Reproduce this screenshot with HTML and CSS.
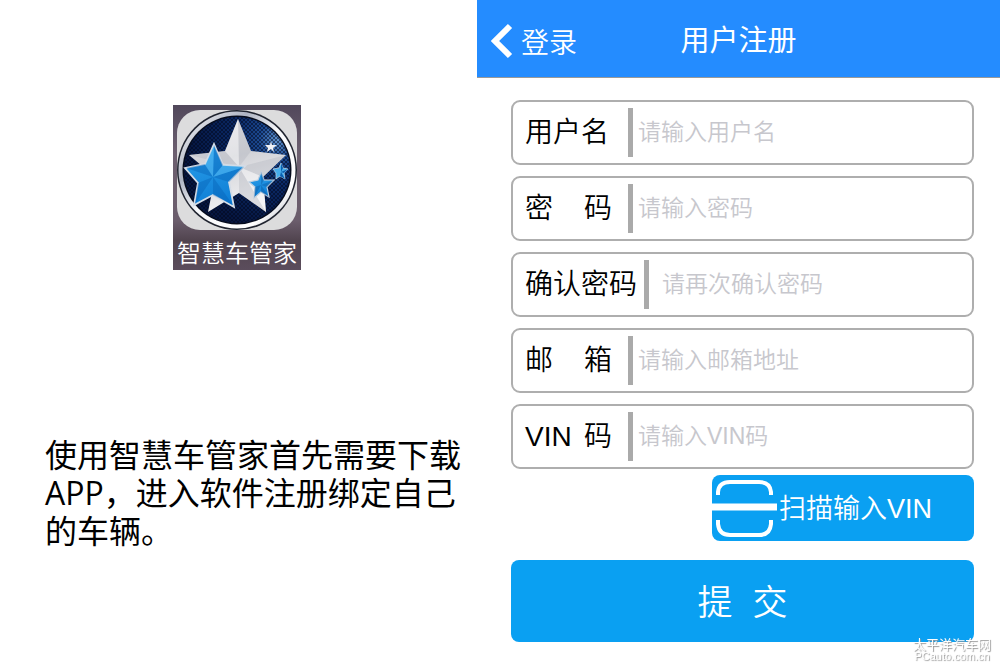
FILE: index.html
```
<!DOCTYPE html>
<html lang="zh-CN">

<head>
    <meta charset="UTF-8">
    <meta name="viewport" content="width=device-width, initial-scale=1.0">
    <title>用户注册</title>
    <link rel="stylesheet" href="styles.css">
</head>

<body>
    <section class="intro">
        <figure class="app">
            <svg class="app-icon" viewBox="4 5 120 120" aria-hidden="true">
                <defs>
                    <linearGradient id="ring" x1="0" y1="0" x2="1" y2="1">
                        <stop offset="0" stop-color="#ffffff"/>
                        <stop offset="0.3" stop-color="#aeb4c2"/>
                        <stop offset="0.5" stop-color="#f7f8fb"/>
                        <stop offset="0.8" stop-color="#ffffff"/>
                        <stop offset="1" stop-color="#9298a6"/>
                    </linearGradient>
                    <radialGradient id="night" cx="0.88" cy="0.22" r="0.85">
                        <stop offset="0" stop-color="#5f93d0"/>
                        <stop offset="0.2" stop-color="#1c4a92"/>
                        <stop offset="0.5" stop-color="#0a2864"/>
                        <stop offset="1" stop-color="#061640"/>
                    </radialGradient>
                    <linearGradient id="silver" x1="0" y1="0" x2="0.3" y2="1">
                        <stop offset="0" stop-color="#e4e4e8"/>
                        <stop offset="0.5" stop-color="#d2d3d8"/>
                        <stop offset="1" stop-color="#efeff1"/>
                    </linearGradient>
                    <linearGradient id="blue" x1="0" y1="0" x2="0.2" y2="1">
                        <stop offset="0" stop-color="#2ea3ec"/>
                        <stop offset="1" stop-color="#0f7fd6"/>
                    </linearGradient>
                    <pattern id="mesh" width="4" height="4" patternUnits="userSpaceOnUse">
                        <path d="M0 1h2M2 3h2" stroke="#01061a" stroke-width="1.4"/>
                    </pattern>
                </defs>
                <rect x="4" y="5" width="120" height="120" rx="23" fill="#dcdcdd"/>
                <circle cx="64" cy="65" r="60" fill="#20242f"/>
                <circle cx="64" cy="65" r="58.5" fill="url(#ring)"/>
                <circle cx="64" cy="65" r="54.5" fill="#050b1c"/>
                <circle cx="64" cy="65" r="53" fill="url(#night)"/>
                <circle cx="64" cy="65" r="53" fill="url(#mesh)" opacity="0.7"/>

                <!-- big silver star -->
                <path d="M65 14L78 46L113 50L90 72L93 107L66 88L35 107L42 72L16 50L52 46Z" fill="url(#silver)"/>
                <path d="M65 14L78 46L66 62ZM113 50L90 72L66 62ZM93 107L66 88L66 62ZM16 50L52 46L66 62Z" fill="#a7a9b2" opacity="0.28"/>
                <path d="M65 14L52 46L66 62ZM90 72L93 107L66 62Z" fill="#fff" opacity="0.35"/>

                <!-- blue star -->
                <path d="M41 39L50 60L72 61L56 77L61 102L40 90L21 100L25 78L12 63L32 59Z" fill="url(#blue)" stroke="#d5dde7" stroke-width="1.8"/>
                <path d="M41 40L50 60L40 72ZM71 62L56 77L40 72ZM60 100L40 90L40 72ZM22 99L25 78L40 72ZM13 63L32 59L40 72Z" fill="#0560b4" opacity="0.4"/>
                <path d="M41 40L32 60L40 72ZM50 60L71 62L40 72Z" fill="#79d0fb" opacity="0.35"/>

                <path d="M88 67L91 75L101 75L94 82L96 92L88 87L81 93L82 82L76 77L85 75Z" fill="url(#blue)" stroke="#bfcfe0" stroke-width="1.2"/>
                <path d="M88 67L91 75L88 80ZM101 75L94 82L88 80ZM96 92L88 87L88 80ZM81 93L82 82L88 80Z" fill="#07549e" opacity="0.4"/>

                <path d="M108 58L110 63L115 64L111 68L112 74L107 71L103 74L103 68L100 64L106 63Z" fill="#46acea" stroke="#b6cfe6" stroke-width="0.8"/>
                <path d="M108 58L110 63L108 67ZM115 64L111 68L108 67ZM112 74L107 71L108 67Z" fill="#0a5faf"/>
                <path d="M98 36L99 40L104 40L100 43L101 47L98 44L94 47L95 43L92 40L97 40Z" fill="#f0f1f4"/>
            </svg>
            <figcaption>智慧车管家</figcaption>
        </figure>
        <p class="intro-text">使用智慧车管家首先需要下载<br>APP，进入软件注册绑定自己<br>的车辆。</p>
    </section>

    <main class="register">
        <header class="top-bar">
            <a class="back" href="#">
                <svg width="22" height="36" viewBox="0 0 22 36" fill="none" stroke="#fff" stroke-width="6" aria-hidden="true">
                    <path d="M19 3L4 18L19 33"/>
                </svg>
                登录
            </a>
            <h1>用户注册</h1>
        </header>

        <form class="form">
            <div class="field">
                <label for="username">用户名</label>
                <input type="text" id="username" placeholder="请输入用户名">
            </div>
            <div class="field">
                <label for="password"><span>密</span><span>码</span></label>
                <input type="password" id="password" placeholder="请输入密码">
            </div>
            <div class="field field-wide">
                <label for="confirm">确认密码</label>
                <input type="password" id="confirm" placeholder="请再次确认密码">
            </div>
            <div class="field">
                <label for="email"><span>邮</span><span>箱</span></label>
                <input type="email" id="email" placeholder="请输入邮箱地址">
            </div>
            <div class="field">
                <label for="vin"><span>VIN</span><span>码</span></label>
                <input type="text" id="vin" placeholder="请输入VIN码">
            </div>

            <button type="button" class="scan-btn">
                <svg width="65" height="60" viewBox="0 0 65 60" fill="none" stroke="#fff" aria-hidden="true">
                    <path d="M6 17V14Q7 4 18 4H47Q58 4 59 14V17" stroke-width="4"/>
                    <path d="M6 42V46Q7 57 18 57H47Q58 57 59 46V42" stroke-width="4"/>
                    <path d="M0 29H65" stroke-width="7"/>
                </svg>
                <span>扫描输入VIN</span>
            </button>
            <button type="submit" class="submit-btn"><span>提</span><span>交</span></button>
        </form>
    </main>

    <div class="watermark">
        <div>太平洋汽车网</div>
        <div class="site">PCauto.com.cn</div>
    </div>
</body>

</html>
```
FILE: styles.css
```
* {
    margin: 0;
    padding: 0;
    box-sizing: border-box;
}

body {
    display: grid;
    grid-template-columns: 477fr 523fr;
    min-height: 100vh;
    background: #fff;
    color: #000;
    font-family: "Open Sans", "Noto Sans CJK SC", sans-serif;
}

/* left side */
.intro {
    padding: 105px 8px 0 45px;
}

.app {
    width: 128px;
    height: 165px;
    margin: 0 auto 166px 128px;
    padding-top: 5px;
    background: linear-gradient(#51485b, #6d6070 30%, #6b5d6c 70%, #51444f 82%, #5b4d5c);
    color: #fff;
    text-align: center;
}

.app-icon {
    display: block;
    width: 120px;
    height: 120px;
    margin: 0 auto;
}

.app figcaption {
    font-size: 24px;
    font-weight: 350;
    line-height: 45px;
    white-space: nowrap;
}

.intro-text {
    font-size: 32px;
    line-height: 38px;
    white-space: nowrap;
}

/* right side */
.register {
    font-family: "Liberation Sans", "Noto Sans CJK SC", sans-serif;
}

.top-bar {
    display: grid;
    grid-template-columns: 1fr auto 1fr;
    align-items: center;
    height: 78px;
    padding: 4px 14px 0;
    background: #248cff;
    border-bottom: 1px solid #999;
    color: #fff;
}

.back {
    display: flex;
    align-items: center;
    gap: 8px;
    color: #fff;
    font-size: 28px;
    font-weight: 350;
    text-decoration: none;
}

h1 {
    font-size: 29px;
    font-weight: 400;
    line-height: 40px;
}

.form {
    display: flex;
    flex-direction: column;
    gap: 11px;
    padding: 22px 26px 20px 34px;
}

.field {
    display: flex;
    align-items: center;
    height: 65px;
    padding: 0 12px;
    border: 2px solid #aeaeae;
    border-radius: 9px;
}

.field label {
    display: flex;
    justify-content: space-between;
    flex: none;
    width: 87px;
    margin-right: 16px;
    font-size: 28px;
    font-weight: 350;
    line-height: 40px;
    white-space: nowrap;
}

.field input {
    flex: 1;
    min-width: 0;
    height: 49px;
    padding-left: 5px;
    border: none;
    border-left: 5px solid #aaa;
    outline: none;
    background: none;
    font-family: inherit;
    font-size: 23px;
    font-weight: 350;
}

.field input::placeholder {
    color: #c7c7cd;
}

.field-wide label {
    width: 112px;
    margin-right: 7px;
}

.field-wide input {
    padding-left: 13px;
}

button {
    border: none;
    border-radius: 8px;
    background: #0aa0f2;
    color: #fff;
    font-family: inherit;
    font-weight: 350;
    cursor: pointer;
}

.scan-btn {
    display: flex;
    align-items: center;
    align-self: flex-end;
    gap: 2px;
    width: 262px;
    height: 66px;
    margin-top: -5px;
    font-size: 27px;
}

.scan-btn span,
.submit-btn span {
    padding-bottom: 4px;
}

.submit-btn {
    display: flex;
    align-items: center;
    justify-content: center;
    gap: 20px;
    height: 82px;
    margin-top: 8px;
    font-size: 35px;
}

.watermark {
    position: fixed;
    right: 9px;
    bottom: 6px;
    color: #fff;
    font-size: 13px;
    line-height: 14px;
    text-align: center;
    text-shadow: 1px 1px 1px #999;
}

.watermark .site {
    font-family: "Liberation Sans", sans-serif;
    font-size: 11px;
    line-height: 10px;
}
```
